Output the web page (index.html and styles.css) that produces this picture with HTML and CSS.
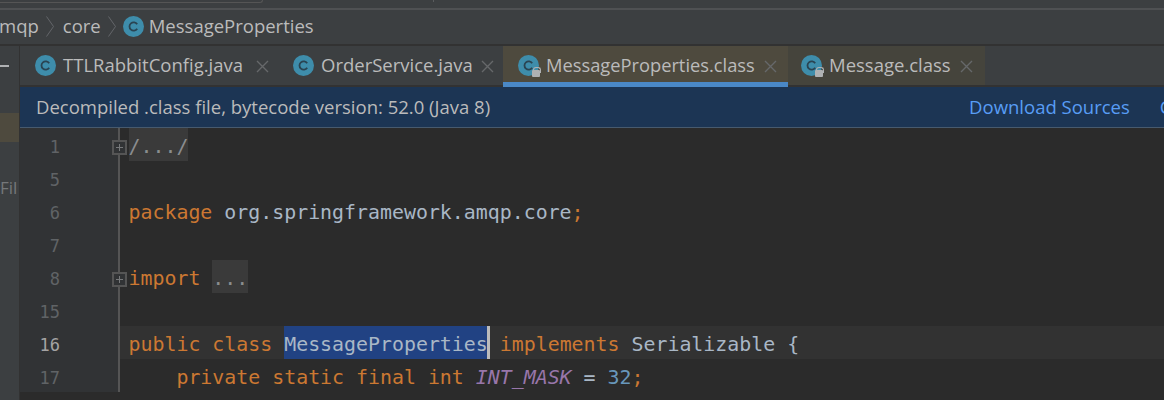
FILE: index.html
```html
<!DOCTYPE html>
<html lang="en">
<head>
<meta charset="utf-8">
<title>MessageProperties.class</title>
<link rel="stylesheet" href="styles.css">
</head>
<body>
<div class="app">
  <div class="topbar"><div class="topbox"></div><div class="tick"></div></div>
  <nav class="crumbs">
    <span class="crumb crumb-cut">mqp</span>
    <svg class="sep" viewBox="0 0 8 21"><path d="M.5 .5l7 10-7 10"/></svg>
    <span class="crumb crumb-mid">core</span>
    <svg class="sep" viewBox="0 0 8 21"><path d="M.5 .5l7 10-7 10"/></svg>
    <svg class="cicon" viewBox="0 0 21 21"><circle cx="10.5" cy="10.5" r="10.5"/><path class="cglyph" d="M14.2 8.2a4.2 4.2 0 1 0 0 4.6"/></svg>
    <span class="crumb crumb-last">MessageProperties</span>
  </nav>
  <div class="main">
    <aside class="side">
      <div class="side-tabs"><span class="dash"></span></div>
      <div class="side-sel"></div>
      <div class="side-text">Fil</div>
    </aside>
    <section class="editor">
      <div class="tabs">
        <div class="tab tab-1">
          <svg class="cicon" viewBox="0 0 21 21"><circle cx="10.5" cy="10.5" r="10.5"/><path class="cglyph" d="M14.2 8.2a4.2 4.2 0 1 0 0 4.6"/></svg>
          <span class="tabname">TTLRabbitConfig.java</span>
          <svg class="close" viewBox="0 0 13 13"><path d="M1 1l11 11M12 1L1 12"/></svg>
        </div>
        <div class="tab tab-2">
          <svg class="cicon" viewBox="0 0 21 21"><circle cx="10.5" cy="10.5" r="10.5"/><path class="cglyph" d="M14.2 8.2a4.2 4.2 0 1 0 0 4.6"/></svg>
          <span class="tabname">OrderService.java</span>
          <svg class="close" viewBox="0 0 13 13"><path d="M1 1l11 11M12 1L1 12"/></svg>
        </div>
        <div class="tab tab-active">
          <span class="iconwrap"><svg class="cicon" viewBox="0 0 21 21"><circle cx="10.5" cy="10.5" r="10.5"/><path class="cglyph" d="M14.2 8.2a4.2 4.2 0 1 0 0 4.6"/></svg><span class="lock"></span></span>
          <span class="tabname">MessageProperties.class</span>
          <svg class="close" viewBox="0 0 13 13"><path d="M1 1l11 11M12 1L1 12"/></svg>
        </div>
        <div class="tab tab-ro">
          <span class="iconwrap"><svg class="cicon" viewBox="0 0 21 21"><circle cx="10.5" cy="10.5" r="10.5"/><path class="cglyph" d="M14.2 8.2a4.2 4.2 0 1 0 0 4.6"/></svg><span class="lock"></span></span>
          <span class="tabname">Message.class</span>
          <svg class="close" viewBox="0 0 13 13"><path d="M1 1l11 11M12 1L1 12"/></svg>
        </div>
      </div>
      <div class="banner">
        <span class="banner-text">Decompiled .class file, bytecode version: 52.0 (Java 8)</span>
        <a class="link link-first">Download Sources</a>
        <a class="link">Choose Sources...</a>
      </div>
      <div class="code">
        <div class="line"><span class="num">1</span><span class="fold"><span class="box"></span></span><span class="txt"><span class="folded">/.../</span></span></div>
        <div class="line"><span class="num">5</span><span class="fold"></span><span class="txt"></span></div>
        <div class="line"><span class="num">6</span><span class="fold"></span><span class="txt"><span class="kw">package</span> org.springframework.amqp.core<span class="kw">;</span></span></div>
        <div class="line"><span class="num">7</span><span class="fold"></span><span class="txt"></span></div>
        <div class="line"><span class="num">8</span><span class="fold"><span class="box"></span></span><span class="txt"><span class="kw">import</span> <span class="folded">...</span></span></div>
        <div class="line"><span class="num">15</span><span class="fold"></span><span class="txt"></span></div>
        <div class="line current"><span class="num">16</span><span class="fold"></span><span class="txt"><span class="kw">public class</span> <span class="sel">MessageProperties</span><span class="caret"></span> <span class="kw">implements</span> Serializable {</span></div>
        <div class="line"><span class="num">17</span><span class="fold"></span><span class="txt">    <span class="kw">private static final int</span> <span class="const">INT_MASK</span> = <span class="number">32</span><span class="kw">;</span></span></div>
      </div>
    </section>
  </div>
</div>
</body>
</html>
```
FILE: styles.css
```css
* { box-sizing: border-box; }
html, body { margin: 0; height: 100%; overflow: hidden; background: #3c3f41; }
body { font-family: "Open Sans", "Noto Sans", sans-serif; color: #bbbbbb; }
.app { width: 1164px; height: 400px; display: flex; flex-direction: column; overflow: hidden; }
.topbar { height: 10px; flex: none; display: flex; background: #3c3f41; border-bottom: 2px solid #4f5153; }
.topbox { width: 263px; height: 3px; border-right: 1px solid #555555; border-bottom: 1px solid #555555; border-bottom-right-radius: 3px; }
.tick { width: 1px; height: 2px; margin-left: 170px; background: #5a5c5e; }
.crumbs { height: 36px; flex: none; display: flex; align-items: center; gap: 7px; font-size: 18.5px; background: #3c3f41; border-bottom: 2px solid #323232; padding-bottom: 1px; overflow: hidden; }
.crumb { color: #bbbbbb; white-space: nowrap; margin-bottom: 2px; }
.crumb-cut { margin-left: -1px; }
.crumb-mid { margin-left: 2px; }
.crumb-last { margin-left: -2px; }
.sep { width: 8px; height: 21px; fill: none; stroke: #63666a; stroke-width: 1; flex: none; }
.cicon { display: block; width: 21px; height: 21px; flex: none; fill: #3e8dab; }
.cglyph { fill: none; stroke: #2a4452; stroke-width: 1.8; }
.iconwrap { position: relative; width: 21px; height: 21px; flex: none; display: block; }
.lock { position: absolute; right: -1px; bottom: -1px; width: 8px; height: 7px; background: #afb1b3; border-radius: 1px; }
.lock::before { content: ""; position: absolute; left: 1px; top: -3px; width: 6px; height: 5px; border: 1px solid #afb1b3; border-bottom: 0; border-radius: 3px 3px 0 0; }
.main { flex: 1; display: flex; min-height: 0; }
.side { width: 20px; flex: none; background: #3c3f41; border-right: 1px solid #323232; }
.side-tabs { height: 67px; display: flex; align-items: flex-start; }
.dash { width: 9px; height: 2px; background: #afb1b3; margin-top: 19px; }
.side-sel { height: 29px; background: #4e4a3e; }
.side-text { margin-top: 34px; font-size: 17px; color: #75787a; white-space: nowrap; overflow: hidden; }
.editor { flex: 1; min-width: 0; display: flex; flex-direction: column; background: #2b2b2b; }
.tabs { height: 41px; flex: none; display: flex; background: #3c3f41; border-bottom: 2px solid #323232; }
.tab { display: flex; align-items: center; flex: none; gap: 7px; padding-left: 15px; height: 39px; font-size: 18.5px; color: #bbbbbb; }
.tab-1 { width: 258px; }
.tab-2 { width: 225px; }
.tabname { white-space: nowrap; margin-bottom: 2px; }
.close { width: 13px; height: 13px; flex: none; margin: 1px 9px 0 auto; fill: none; stroke: #66686a; stroke-width: 1.4; }
.tab-active { width: 285px; background: #4e4a3e; box-shadow: inset 0 -5px 0 #4a88c7; height: 41px; padding-bottom: 2px; font-size: 18.3px; }
.tab-active .close { margin-right: 11px; }
.tab-ro { width: 197px; background: #45443c; padding-left: 13px; }
.tab-ro .close { margin-right: 12px; }
.banner { height: 41px; flex: none; display: flex; align-items: center; padding-left: 16px; background: #1c3554; border-bottom: 1px solid #475a6e; font-size: 18.5px; white-space: nowrap; overflow: hidden; padding-bottom: 2px; }
.banner-text { flex: none; }
.link { color: #589df6; flex: none; margin-left: 30px; }
.link-first { margin-left: 479px; }
.code { flex: 1; font-family: "DejaVu Sans Mono", "Liberation Mono", monospace; font-size: 19.9px; background: #2b2b2b; overflow: hidden; }
.line { height: 33px; display: flex; line-height: 38px; }
.num { flex: none; width: 99px; padding-right: 59px; background: #313335; color: #606366; font-size: 17px; text-align: right; }
.fold { width: 10px; flex: none; position: relative; background: #2b2b2b; }
.fold::before { content: ""; position: absolute; left: -1px; top: 0; bottom: 0; width: 2px; background: #555555; }
.box { position: absolute; left: -7px; top: 12px; width: 15px; height: 15px; border: 2px solid #555555; background: #313335; }
.box::after { content: ""; position: absolute; left: 2px; top: 2px; width: 7px; height: 7px; background: linear-gradient(#77797b, #77797b) center / 7px 1px no-repeat, linear-gradient(#77797b, #77797b) center / 1px 7px no-repeat; }
.txt { white-space: pre; color: #a9b7c6; margin-left: -0.5px; }
.kw { color: #cc7832; }
.folded { background: #3a3a3a; color: #8a8d8f; display: inline-block; height: 33px; vertical-align: top; }
.current { background: #323232; }
.current .num { color: #a4a3a3; }
.current .fold { background: #323232; }
.sel { background: #214283; display: inline-block; height: 33px; vertical-align: top; }
.caret { display: inline-block; width: 3px; height: 33px; margin: 0 -2px 0 -1px; background: #bbbbbb; vertical-align: top; }
.const { color: #9876aa; font-style: italic; }
.number { color: #6897bb; }
```
